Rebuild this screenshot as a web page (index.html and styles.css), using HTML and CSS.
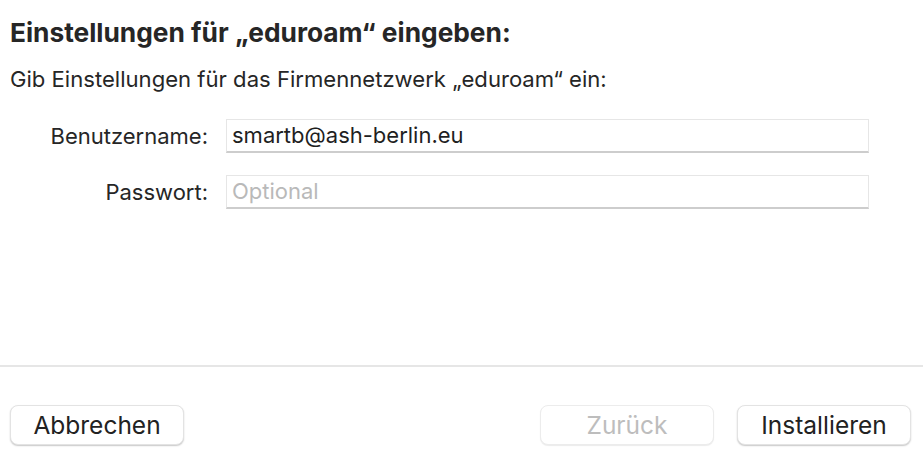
FILE: index.html
```html
<!DOCTYPE html>
<html lang="de">
<head>
<meta charset="utf-8">
<link rel="stylesheet" href="styles.css">
</head>
<body>
<div class="dialog">
  <div class="content">
    <h1 class="title">Einstellungen für „eduroam“ eingeben:</h1>
    <p class="subtitle">Gib Einstellungen für das Firmennetzwerk „eduroam“ ein:</p>
    <div class="form">
      <label class="label">Benutzername:</label>
      <div class="field">smartb@ash-berlin.eu</div>
      <label class="label">Passwort:</label>
      <div class="field placeholder">Optional</div>
    </div>
  </div>
  <div class="divider"></div>
  <div class="footer">
    <button class="btn">Abbrechen</button>
    <div class="spacer"></div>
    <button class="btn disabled">Zurück</button>
    <button class="btn">Installieren</button>
  </div>
</div>
</body>
</html>
```

FILE: styles.css
```css
html, body {
  margin: 0;
  padding: 0;
  background: #ffffff;
}
body {
  font-family: Inter, "Noto Sans", "Liberation Sans", sans-serif;
  color: #262626;
  width: 923px;
  height: 459px;
  overflow: hidden;
}
.dialog {
  display: flex;
  flex-direction: column;
  height: 459px;
}
.content {
  padding: 0 10px;
  height: 365px;
  box-sizing: border-box;
}
.title {
  margin: 0;
  padding-top: 18px;
  font-size: 26.3px;
  font-weight: 700;
  line-height: 30px;
}
.subtitle {
  margin: 0;
  padding-top: 18px;
  font-size: 22.1px;
  line-height: 26px;
  font-weight: 400;
}
.form {
  display: grid;
  grid-template-columns: 198px 643px;
  column-gap: 18px;
  row-gap: 22px;
  margin-top: 27px;
  align-items: center;
}
.label {
  text-align: right;
  font-size: 22px;
}
.field {
  height: 34px;
  box-sizing: border-box;
  border: 1px solid #e6e6e6;
  border-bottom: 2px solid #cdcdcd;
  padding: 0 5px;
  font-size: 22px;
  line-height: 31px;
  color: #1f1f1f;
  background: #fff;
}
.field.placeholder {
  color: #b9b9b9;
}
.divider {
  height: 2px;
  background: #e6e6e6;
}
.footer {
  display: flex;
  align-items: flex-start;
  padding: 38px 12px 0 10px;
  gap: 23px;
}
.spacer {
  flex: 1;
}
.btn {
  width: 174px;
  height: 40px;
  border-radius: 8px;
  border: 1px solid #e3e3e3;
  background: #fff;
  box-shadow: 0 1px 1.5px rgba(0,0,0,0.22);
  font-family: Inter, "Noto Sans", "Liberation Sans", sans-serif;
  font-size: 24.5px;
  color: #222;
  padding: 0;
}
.btn.disabled {
  color: #bdbdbd;
  box-shadow: 0 1px 1px rgba(0,0,0,0.08);
  border-color: #ececec;
}
```
